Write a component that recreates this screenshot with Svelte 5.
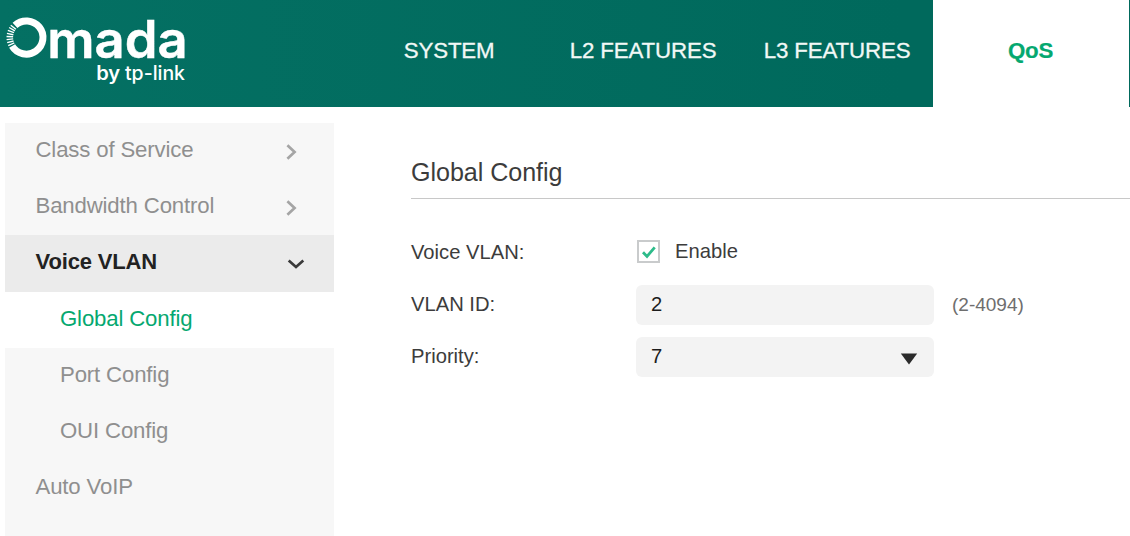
<script>
  const tabs = ["SYSTEM", "L2 FEATURES", "L3 FEATURES", "QoS"];

  const menu = [
    { label: "Class of Service", arrow: "right" },
    { label: "Bandwidth Control", arrow: "right" },
    {
      label: "Voice VLAN",
      arrow: "down",
      children: ["Global Config", "Port Config", "OUI Config"],
    },
    { label: "Auto VoIP" },
  ];

  // short rays on the left side of the logo ring, degrees from due west
  const rays = [-24, -15, -6, 3, 12, 21, 30, 38];

  let activeTab = $state("QoS");
  let activePage = $state("Global Config");
  let enabled = $state(true);
  let vlanId = $state("2");
  let priority = $state("7");
</script>

<header class="topbar">
  <svg class="logo" viewBox="0 0 200 107" role="img" aria-label="Omada by tp-link">
    <path class="ring" d="M15 25.4 A16.6 16.6 0 1 1 12.1 46" />
    {#each rays as deg}
      <line class="ray" x1="-13.4" x2="-20" y1="0" y2="0" transform="translate(26.5 37.5) rotate({deg})" />
    {/each}
    <text class="brand" x="47.3" y="57.6" textLength="140.5" lengthAdjust="spacingAndGlyphs">mada</text>
    <text class="by" x="96.2" y="79.6" textLength="24" lengthAdjust="spacingAndGlyphs">by</text>
    <text class="by thin" x="125" y="79.6" textLength="60" lengthAdjust="spacingAndGlyphs">tp-link</text>
  </svg>
  <nav class="tabs">
    {#each tabs as tab}
      <button class="tab" class:active={tab === activeTab} onclick={() => (activeTab = tab)}>{tab}</button>
    {/each}
  </nav>
</header>

<div class="page">
  <aside class="sidebar">
    {#each menu as item}
      <button class="item" class:open={item.children}>
        <span>{item.label}</span>
        {#if item.arrow === "right"}
          <svg class="arrow" width="12" height="18" viewBox="0 0 12 18"><path d="M1.4 2.2 L8.6 9 L1.4 15.8" /></svg>
        {:else if item.arrow === "down"}
          <svg class="arrow down" width="18" height="12" viewBox="0 0 18 12"><path d="M1.7 2.6 L9 9 L16.3 2.6" /></svg>
        {/if}
      </button>
      {#each item.children ?? [] as child}
        <button class="item child" class:active={child === activePage} onclick={() => (activePage = child)}>
          {child}
        </button>
      {/each}
    {/each}
  </aside>

  <main class="content">
    <h2>Global Config</h2>
    <div class="row">
      <span class="label">Voice VLAN:</span>
      <button class="check" role="checkbox" aria-checked={enabled} onclick={() => (enabled = !enabled)}>
        <span class="box">
          {#if enabled}
            <svg width="18" height="18" viewBox="0 0 18 18"><path d="M3 9.3 L7 13.4 L14.7 4.3" /></svg>
          {/if}
        </span>
        <span>Enable</span>
      </button>
    </div>
    <div class="row">
      <label class="label" for="vlan-id">VLAN ID:</label>
      <input id="vlan-id" class="field" bind:value={vlanId} />
      <span class="hint">(2-4094)</span>
    </div>
    <div class="row">
      <span class="label">Priority:</span>
      <button class="field select">
        <span>{priority}</span>
        <svg width="18" height="12" viewBox="0 0 18 12"><path d="M0.8 0.5 H17.2 L9 11.5 Z" /></svg>
      </button>
    </div>
  </main>
</div>

<style>
  :global(body) {
    background: #fff;
    font-family: "Liberation Sans", Arial, sans-serif;
    overflow: hidden;
  }
  button,
  input {
    font: inherit;
    color: inherit;
    letter-spacing: inherit;
    background: none;
    border: 0;
    padding: 0;
    box-sizing: border-box;
  }
  .topbar {
    display: flex;
    justify-content: space-between;
    height: 107.4px;
    box-sizing: border-box;
    background: linear-gradient(90deg, #047063, #00695c 80%);
  }
  .logo {
    width: 200px;
    height: 107px;
  }
  .ring {
    fill: none;
    stroke: #fff;
    stroke-width: 7;
  }
  .ray {
    stroke: #fff;
    stroke-width: 1.4;
  }
  .brand {
    font: 600 52px Inter, sans-serif;
    fill: #fff;
    stroke: #fff;
    stroke-width: 0.5;
  }
  .by {
    font: 600 19.5px Inter, sans-serif;
    fill: #fff;
  }
  .by.thin {
    font-weight: 500;
  }
  .tabs {
    display: flex;
    margin-right: 1.4px;
  }
  .tab {
    width: 194px;
    padding: 0 0 5px 3px;
    font-size: 22.3px;
    letter-spacing: -0.15px;
    color: #f1f8f6;
    -webkit-text-stroke: 0.3px #f1f8f6;
  }
  .tab.active {
    width: 196px;
    padding-left: 0;
    background: #fff;
    color: #05a870;
    font-weight: 700;
    -webkit-text-stroke: 0.2px #05a870;
  }
  .page {
    display: flex;
    height: 429px;
  }
  .sidebar {
    width: 329px;
    margin: 15.6px 0 0 5px;
    background: #f7f7f7;
  }
  .item {
    display: flex;
    align-items: center;
    justify-content: space-between;
    width: 100%;
    height: 56.2px;
    padding: 0 36px 2px 30.5px;
    font-size: 22.2px;
    letter-spacing: -0.15px;
    color: #8f8f8f;
    text-align: left;
  }
  .item.open {
    padding-right: 29px;
    background: #ebebeb;
    color: #222;
    font-weight: 700;
    font-size: 22px;
  }
  .item.child {
    padding-left: 55px;
  }
  .item.active {
    background: #fff;
    color: #05a870;
  }
  .arrow {
    margin-top: 3px;
    fill: none;
    stroke: #a5a5a5;
    stroke-width: 2.7;
  }
  .arrow.down {
    stroke: #3a3a3a;
  }
  .content {
    flex: 1;
    margin-left: 77px;
    padding-top: 47px;
    color: #3c3c3c;
    font-size: 20.2px;
  }
  h2 {
    height: 45px;
    margin: 0 0 27px;
    border-bottom: 1px solid #c8c8c8;
    box-sizing: border-box;
    font-size: 25.1px;
    font-weight: 400;
    letter-spacing: -0.05px;
    line-height: 37px;
  }
  .row {
    display: flex;
    align-items: center;
    height: 52.4px;
  }
  .label {
    width: 225px;
    padding-bottom: 1px;
  }
  .check {
    display: flex;
    align-items: center;
    gap: 15px;
    padding: 0 0 3px 1px;
  }
  .box {
    display: flex;
    align-items: center;
    justify-content: center;
    width: 23px;
    height: 23px;
    margin-top: 1px;
    box-sizing: border-box;
    border: 2px solid #c9cbcc;
  }
  .box path {
    fill: none;
    stroke: #2dbb8a;
    stroke-width: 2.8;
  }
  .field {
    width: 298px;
    height: 40px;
    padding: 0 16px 1px 15px;
    border-radius: 6px;
    background: #f3f3f3;
    color: #1c1c1c;
  }
  .select {
    display: flex;
    align-items: center;
    justify-content: space-between;
  }
  .select svg {
    margin-top: 4px;
    fill: #2b2b2b;
  }
  .hint {
    margin-left: 18px;
    color: #6e6e6e;
    font-size: 19px;
  }
</style>
